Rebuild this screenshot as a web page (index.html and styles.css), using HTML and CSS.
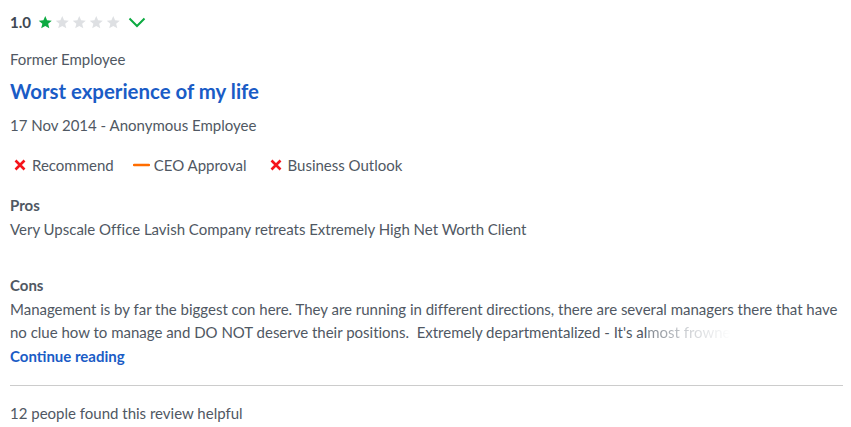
FILE: index.html
```html
<!DOCTYPE html>
<html>
<head>
<meta charset="utf-8">
<link rel="stylesheet" href="styles.css">
</head>
<body>
<div class="review">
  <div class="rating-row">
    <span class="rating-num">1.0</span>
    <span class="stars">
      <svg class="star on" viewBox="0 0 24 24"><path d="M12 1.5l3 7.3 7.8.6-6 5.1 1.9 7.6L12 18l-6.7 4.1 1.9-7.6-6-5.1 7.8-.6z"/></svg>
      <svg class="star" viewBox="0 0 24 24"><path d="M12 1.5l3 7.3 7.8.6-6 5.1 1.9 7.6L12 18l-6.7 4.1 1.9-7.6-6-5.1 7.8-.6z"/></svg>
      <svg class="star" viewBox="0 0 24 24"><path d="M12 1.5l3 7.3 7.8.6-6 5.1 1.9 7.6L12 18l-6.7 4.1 1.9-7.6-6-5.1 7.8-.6z"/></svg>
      <svg class="star" viewBox="0 0 24 24"><path d="M12 1.5l3 7.3 7.8.6-6 5.1 1.9 7.6L12 18l-6.7 4.1 1.9-7.6-6-5.1 7.8-.6z"/></svg>
      <svg class="star" viewBox="0 0 24 24"><path d="M12 1.5l3 7.3 7.8.6-6 5.1 1.9 7.6L12 18l-6.7 4.1 1.9-7.6-6-5.1 7.8-.6z"/></svg>
    </span>
    <svg class="chevron" viewBox="0 0 18 12"><path d="M1.5 2.5l7.5 7.5 7.5-7.5" fill="none" stroke="#0caa41" stroke-width="2"/></svg>
  </div>
  <div class="status">Former Employee</div>
  <h2 class="title">Worst experience of my life</h2>
  <div class="meta">17 Nov 2014 - Anonymous Employee</div>
  <div class="checks">
    <span class="check"><svg class="icon" viewBox="0 0 12 12"><path d="M1.5 1.5l9 9M10.5 1.5l-9 9" stroke="#f5131b" stroke-width="2.6" fill="none"/></svg>Recommend</span>
    <span class="check"><svg class="dash" viewBox="0 0 17 4"><path d="M1 2h15" stroke="#ff6d00" stroke-width="2.5" stroke-linecap="round"/></svg>CEO Approval</span>
    <span class="check"><svg class="icon" viewBox="0 0 12 12"><path d="M1.5 1.5l9 9M10.5 1.5l-9 9" stroke="#f5131b" stroke-width="2.6" fill="none"/></svg>Business Outlook</span>
  </div>
  <div class="section">
    <div class="label">Pros</div>
    <p class="text">Very Upscale Office Lavish Company retreats Extremely High Net Worth Client</p>
  </div>
  <div class="section cons">
    <div class="label">Cons</div>
    <p class="text">Management is by far the biggest con here. They are running in different directions, there are several managers there that have no clue how to manage and DO NOT deserve their positions.&nbsp; Extremely departmentalized - It's al<span class="fade">most frowne</span></p>
  </div>
  <a class="more" href="#">Continue reading</a>
  <hr class="rule">
  <div class="helpful">12 people found this review helpful</div>
</div>
</body>
</html>
```
FILE: styles.css
```css
body {
  margin: 0;
  background: #fff;
  font-family: Lato, "Open Sans", sans-serif;
  color: #505863;
  font-size: 15px;
}
.review {
  padding: 10px 8px 0 10px;
}
.rating-row {
  display: flex;
  align-items: center;
  height: 24px;
}
.rating-num {
  font-size: 15px;
  font-weight: 700;
  color: #404852;
  margin-right: 7px;
}
.stars {
  display: flex;
  gap: 2.5px;
}
.star {
  width: 14.5px;
  height: 14.5px;
  fill: #dee0e3;
}
.star.on {
  fill: #0caa41;
}
.chevron {
  width: 18px;
  height: 12px;
  margin-left: 8px;
}
.status {
  margin-top: 14px;
  line-height: 22px;
}
.title {
  margin: 8px 0 0;
  font-size: 20.4px;
  font-weight: 700;
  color: #1a5cc6;
  line-height: 26px;
}
.meta {
  margin-top: 10px;
  line-height: 22px;
}
.checks {
  display: flex;
  gap: 19px;
  margin-top: 18px;
  line-height: 22px;
}
.check {
  display: flex;
  align-items: center;
}
.icon {
  width: 12px;
  height: 12px;
  margin: 0 6px 0 4px;
}
.dash {
  width: 17px;
  height: 4px;
  margin-right: 4px;
}
.section {
  margin-top: 18px;
}
.label {
  font-weight: 700;
  line-height: 22px;
}
.text {
  margin: 1px 0 0;
  line-height: 24px;
  letter-spacing: -0.01px;
}
.cons {
  margin-top: 33px;
}
.cons .text {
  margin-top: 2px;
  line-height: 23px;
}
.fade {
  background: linear-gradient(to right, #7d838b 0%, #c9ccd0 45%, #ffffff 100%);
  -webkit-background-clip: text;
  background-clip: text;
  color: transparent;
}
.more {
  display: block;
  font-weight: 700;
  color: #1a5cc6;
  text-decoration: none;
  line-height: 24px;
}
.rule {
  border: 0;
  border-top: 1px solid #ccc;
  margin: 17px 0 0;
}
.helpful {
  margin-top: 16px;
  line-height: 22px;
}
```
